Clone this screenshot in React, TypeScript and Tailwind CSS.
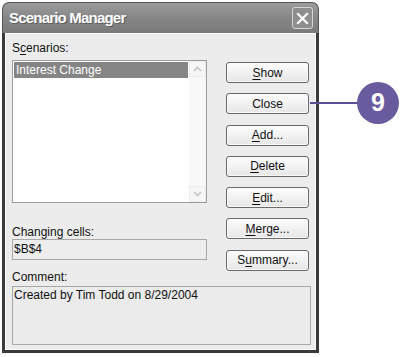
import React from "react"

// one mnemonic letter underlined, the rest plain
function Label({ text, u }: { text: string; u?: number }) {
    if (u === undefined) return <>{text}</>
    return (
        <>
            {text.slice(0, u)}
            <span className="underline underline-offset-2">{text[u]}</span>
            {text.slice(u + 1)}
        </>
    )
}

function DialogButton({ text, u }: { text: string; u?: number }) {
    return (
        <button className="h-[21px] w-[83px] shrink-0 rounded-[3px] border border-[#6a6a6a] bg-gradient-to-b from-[#fdfdfd] to-[#e6e6e6] text-[12px] leading-none text-[#111] shadow-[inset_0_0_0_1px_#f8f8f8]">
            <Label text={text} u={u} />
        </button>
    )
}

function Chevron({ up }: { up?: boolean }) {
    return (
        <svg width="9" height="6" viewBox="0 0 9 6">
            <path d={up ? "M1 5 L4.5 1.5 L8 5" : "M1 1 L4.5 4.5 L8 1"} fill="none" stroke="#c4c4c4" strokeWidth="1.6" />
        </svg>
    )
}

export default function App() {

    const buttons: { text: string; u?: number }[] = [
        { text: "Show", u: 0 },
        { text: "Close" },
        { text: "Add...", u: 0 },
        { text: "Delete", u: 0 },
        { text: "Edit...", u: 0 },
        { text: "Merge...", u: 0 },
        { text: "Summary...", u: 1 },
    ]

    return (
        <div className="relative h-[357px] w-[400px] overflow-hidden bg-white font-['Liberation_Sans',Arial,sans-serif]">

            {/* WINDOW */}
            <div className="ml-[2px] mt-[2px] w-[317px]">

                {/* TITLE BAR */}
                <div className="flex h-[31px] items-center justify-between rounded-t-[7px] border-x border-t border-[#555] bg-gradient-to-b from-[#9c9c9c] via-[#868686] to-[#7a7a7a] pl-[6px] pr-[5px]">
                    <span className="text-[15px] font-bold tracking-[-0.8px] text-white [text-shadow:1px_1px_0_#5c5c5c]">
                        Scenario Manager
                    </span>
                    <div className="flex h-[22px] w-[21px] items-center justify-center rounded-[3px] border border-[#d6d6d6] bg-[#8e8e8e]">
                        <svg width="13" height="13" viewBox="0 0 13 13">
                            <path d="M2 2 L11 11 M11 2 L2 11" stroke="white" strokeWidth="2.2" strokeLinecap="square" />
                        </svg>
                    </div>
                </div>

                {/* BODY */}
                <div className="border-x-[3px] border-b-[3px] border-[#3a3a3a]">
                    <div className="border border-[#fbfbfb] bg-[#ececec] pb-[4px] pl-[6px] pr-[4px] pt-[7px] text-[12px] text-[#111]">

                        <div className="flex h-[219px] items-start justify-between">

                            {/* LEFT COLUMN */}
                            <div className="flex w-[195px] flex-col">
                                <div className="h-[14px] leading-[14px]"><Label text="Scenarios:" u={1} /></div>

                                {/* LIST */}
                                <div className="mt-[5px] flex h-[143px] border border-[#9c9c9c] bg-white">
                                    <div className="flex-1 p-[1px]">
                                        <div className="h-[16px] bg-[#858585] pl-[2px] leading-[16px] text-white">Interest Change</div>
                                    </div>
                                    <div className="flex w-[17px] flex-col justify-between bg-[#f8f8f8]">
                                        <div className="flex h-[16px] items-center justify-center border border-[#ececec] bg-[#f6f6f6]"><Chevron up /></div>
                                        <div className="flex h-[16px] items-center justify-center border border-[#ececec] bg-[#f6f6f6]"><Chevron /></div>
                                    </div>
                                </div>

                                <div className="mt-[22px] h-[14px] leading-[14px]">Changing cells:</div>
                                <div className="h-[21px] border border-[#a8a8a8] bg-[#ededed] pl-[1px] leading-[19px]">$B$4</div>
                            </div>

                            {/* BUTTONS */}
                            <div className="mr-[2px] mt-[21px] flex shrink-0 flex-col gap-[10.3px]">
                                {buttons.map((b) => (
                                    <DialogButton key={b.text} text={b.text} u={b.u} />
                                ))}
                            </div>
                        </div>

                        {/* COMMENT */}
                        <div className="mt-[10px] h-[14px] leading-[14px]">Comment:</div>
                        <div className="mt-[2px] h-[59px] border border-[#a8a8a8] bg-[#ebebeb] pl-[1px] leading-[16px]">
                            Created by Tim Todd on 8/29/2004
                        </div>
                    </div>
                </div>
            </div>

            {/* CALLOUT */}
            <div className="absolute left-[310px] top-[102px] h-[2px] w-[50px] bg-[#5d4e96]" />
            <div className="absolute left-[357px] top-[82px] flex h-[42px] w-[42px] items-center justify-center rounded-full bg-[#6a5b9f] text-[25px] font-bold text-white">
                9
            </div>
        </div>
    )
}
